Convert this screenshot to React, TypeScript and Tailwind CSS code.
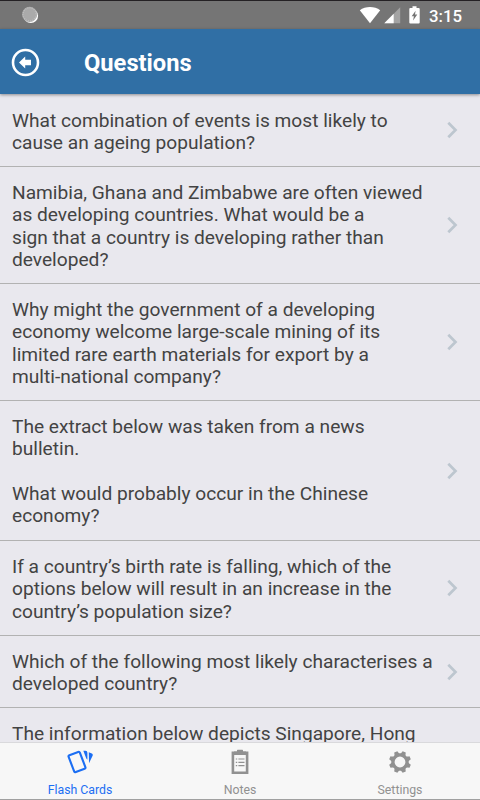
import React from "react";

const questions = [
  { h: "h-[73px]", lines: ["What combination of events is most likely to", "cause an ageing population?"] },
  { h: "h-[117px]", lines: ["Namibia, Ghana and Zimbabwe are often viewed", "as developing countries. What would be a", "sign that a country is developing rather than", "developed?"] },
  { h: "h-[117px]", lines: ["Why might the government of a developing", "economy welcome large-scale mining of its", "limited rare earth materials for export by a", "multi-national company?"] },
  { h: "h-[140px]", lines: ["The extract below was taken from a news", "bulletin.", "", "What would probably occur in the Chinese", "economy?"] },
  { h: "h-[95px]", lines: ["If a country’s birth rate is falling, which of the", "options below will result in an increase in the", "country’s population size?"] },
  { h: "h-[72px]", lines: ["Which of the following most likely characterises a", "developed country?"] },
  { h: "h-[117px]", lines: ["The information below depicts Singapore, Hong"] },
];

function StatusBar() {
  return (
    <div className="flex h-[29px] shrink-0 items-center border-t border-[#242124] bg-[#757575] pr-[18px] pl-[21px] text-white">
      <svg width="18" height="18" viewBox="0 0 18 18">
        <circle cx="9.8" cy="9.8" r="7.3" fill="#fff" />
        <circle cx="8.6" cy="8.4" r="7.6" fill="#aaa" />
        <circle cx="8.6" cy="8.4" r="6.6" fill="none" stroke="#c0c0c0" strokeWidth="1.2" strokeDasharray="1 1.2" />
      </svg>
      <svg className="mr-[3px] ml-auto" width="22" height="18" viewBox="0 0 22 18">
        <path d="M.8 4.3C6.5-.1 15.500-.1 21.200 4.300L11 17.200Z" fill="#fff" />
      </svg>
      <svg width="17" height="18" viewBox="0 0 17 18">
        <path d="M.3 17.200 16.200 1.300V17.200Z" fill="#a3a3a3" />
        <path d="M.3 17.200 9.700 7.800V17.200Z" fill="#fff" />
      </svg>
      <svg className="ml-[8px]" width="11" height="18" viewBox="0 0 11 18">
        <path d="M3.500.3h4v1.600h2.200q1 0 1 1v13.600q0 1-1 1H1.300q-1 0-1-1V2.900q0-1 1-1h2.200Z" fill="#fff" />
        <path d="M6.600 4.700 2.700 10.200h2.200l-.8 4.300 4.200-6H6Z" fill="#757575" />
      </svg>
      <span className="ml-[9px] w-[33px] pt-[2px] text-[16.800px] leading-none font-medium whitespace-nowrap">3:15</span>
    </div>
  );
}

function Header() {
  return (
    <header className="relative z-10 flex h-[65px] shrink-0 items-center bg-[#306fa5] pl-[11px] shadow-[0_1px_3px_rgba(0,0,0,0.4)]">
      <svg className="mt-[1px]" width="29" height="29" viewBox="0 0 29 29">
        <circle cx="14.500" cy="14.500" r="12.500" fill="none" stroke="#fff" strokeWidth="2.600" />
        <path d="M8 14.500 14.200 8.500V11.700H20V17.300H14.200V20.500Z" fill="#fff" />
      </svg>
      <h1 className="ml-[44px] pt-[4px] text-[23.700px] font-bold text-white">Questions</h1>
    </header>
  );
}

function Tab({ label, active, children }: { label: string; active?: boolean; children: React.ReactNode }) {
  return (
    <div className={`flex flex-1 flex-col items-center ${active ? "text-[#1b6ef3]" : "text-[#919191]"}`}>
      <div className="mt-[5px] flex h-[28px] items-center justify-center">{children}</div>
      <span className="mt-[7px] text-[12.300px] leading-[15px]">{label}</span>
    </div>
  );
}

export default function App() {
  return (
    <div className="flex h-[800px] w-[480px] flex-col overflow-hidden bg-[#e9e8ee] font-[Roboto,sans-serif]">
      <StatusBar />
      <Header />
      <main className="min-h-0 flex-1 overflow-hidden">
        {questions.map((q, row) => (
          <div key={q.lines[0]} className={`flex border-b border-[#b2b2b2] pr-[22px] pl-[12px] text-[#434343] ${q.h}`}>
            <p className={`flex-1 text-[19.150px] leading-[22.250px] whitespace-nowrap ${row === 0 ? "pt-[16px]" : "pt-[15px]"}`}>
              {q.lines.map((line, i) => (
                <span key={i} className="block min-h-[22.250px]">{line}</span>
              ))}
            </p>
            <svg className="shrink-0 self-center" width="12" height="18" viewBox="0 0 12 18">
              <path d="M2.300 1.800 9.500 9 2.300 16.200" fill="none" stroke="#bdc6cf" strokeWidth="2.700" />
            </svg>
          </div>
        ))}
      </main>
      <nav className="flex h-[58px] shrink-0 border-t border-b border-t-[#d9d9dc] border-b-[#a0a0a0] bg-[#f7f7f7]">
        <Tab label="Flash Cards" active>
          <svg width="26" height="26" viewBox="0 0 26 26">
            <rect x="4" y="4" width="12" height="18" rx="1.300" fill="none" stroke="currentColor" strokeWidth="2.100" transform="rotate(-21 10 13)" />
            <path d="M16.300 1.800H18.500Q20.400 2 20.400 3.800V10.800L19.300 9.600ZM21.800 3.300 24.800 4.600Q26.200 5.300 25.600 6.700L22 14.300Z" fill="currentColor" />
          </svg>
        </Tab>
        <Tab label="Notes">
          <svg width="18" height="26" viewBox="0 0 18 26">
            <path d="M1.900 3.900H16.100V23.700H1.900Z" fill="none" stroke="currentColor" strokeWidth="2.600" />
            <path d="M3 2.600H6V1.500Q6 .8 6.600.8H11.400Q12 .8 12 1.500V2.600H15V6H3Z" fill="currentColor" />
            <path d="M4.800 10H6.200M4.800 13.300H6.200M4.800 16.600H6.200M7.400 10H13.500M7.400 13.300H13.500M7.400 16.600H13.500" stroke="currentColor" strokeWidth="1.200" />
          </svg>
        </Tab>
        <Tab label="Settings">
          <svg width="22" height="22" viewBox="-11 -11 22 22">
            <circle r="6.900" fill="none" stroke="currentColor" strokeWidth="3" />
            {[22.5, 67.5, 112.5, 157.5, 202.5, 247.5, 292.5, 337.5].map((a) => (
              <path key={a} d="M-3.500-7.200Q-2-8.500-1.700-11H1.700Q2-8.500 3.500-7.200Z" fill="currentColor" transform={`rotate(${a})`} />
            ))}
          </svg>
        </Tab>
      </nav>
    </div>
  );
}
